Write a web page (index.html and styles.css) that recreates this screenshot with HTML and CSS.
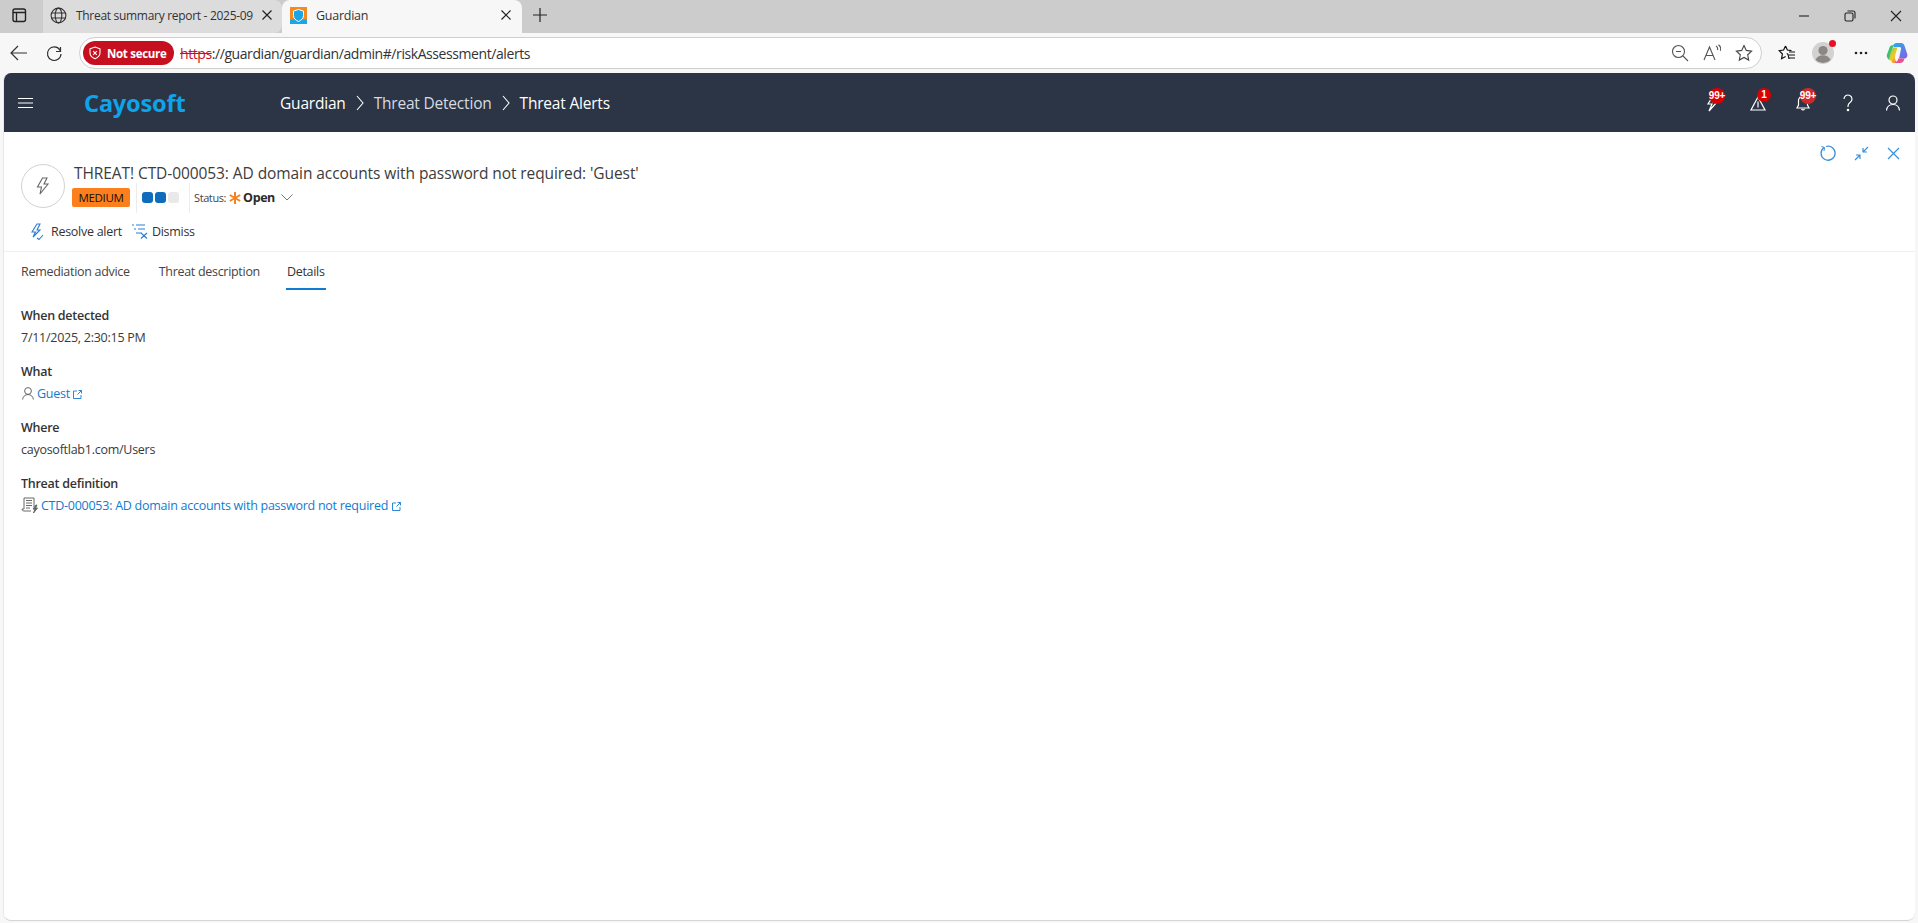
FILE: index.html
```html
<!DOCTYPE html>
<html lang="en">
<head>
<meta charset="utf-8">
<title>Guardian</title>
<link rel="stylesheet" href="styles.css">
</head>
<body>
<div class="browser">
  <div class="tabstrip">
    <div class="side-btn">
      <svg width="18" height="18" viewBox="0 0 18 18" fill="none" stroke="#222" stroke-width="1.4"><rect x="3" y="3" width="12.5" height="12.5" rx="2"/><path d="M3 6.500h12.500M6.500 6.500v9" stroke-width="1.300"/></svg>
    </div>
    <div class="tab">
      <svg class="tab-icon" width="17" height="17" viewBox="0 0 17 17" fill="none" stroke="#333" stroke-width="1.1"><circle cx="8.5" cy="8.5" r="7.4"/><ellipse cx="8.5" cy="8.5" rx="3.3" ry="7.4"/><path d="M1.6 6h13.8M1.6 11h13.8"/></svg>
      <span class="tab-title">Threat summary report - 2025-09</span>
      <svg class="tab-close" width="12" height="12" viewBox="0 0 12 12" stroke="#222" stroke-width="1.2"><path d="M1.5 1.5l9 9M10.5 1.5l-9 9"/></svg>
    </div>
    <div class="tab tab-active">
      <svg class="tab-icon" width="17" height="17" viewBox="0 0 17 17"><rect width="17" height="17" fill="#f78a1d"/><rect y="12.5" width="17" height="4.5" fill="#1aa5e6"/><path d="M8.5 2.5l5 1.6v4.4c0 3-2.3 4.8-5 6-2.7-1.2-5-3-5-6V4.100z" fill="#1aa5e6" stroke="#fff" stroke-width="1"/></svg>
      <span class="tab-title">Guardian</span>
      <svg class="tab-close" width="12" height="12" viewBox="0 0 12 12" stroke="#222" stroke-width="1.2"><path d="M1.5 1.5l9 9M10.5 1.5l-9 9"/></svg>
    </div>
    <svg class="new-tab" width="14" height="14" viewBox="0 0 14 14" stroke="#222" stroke-width="1.2"><path d="M7 0v14M0 7h14"/></svg>
    <div class="win-controls">
      <svg width="12" height="12" viewBox="0 0 12 12" stroke="#222" stroke-width="1.1"><path d="M1 6h10"/></svg>
      <svg width="12" height="12" viewBox="0 0 12 12" fill="none" stroke="#222" stroke-width="1.1"><rect x="1" y="3" width="8" height="8" rx="1.500"/><path d="M3.500 1h5.500a2 2 0 0 1 2 2v5.500"/></svg>
      <svg width="12" height="12" viewBox="0 0 12 12" stroke="#222" stroke-width="1.1"><path d="M1 1l10 10M11 1L1 11"/></svg>
    </div>
  </div>

  <div class="toolbar">
    <svg class="nav-back" width="18" height="16" viewBox="0 0 18 16" fill="none" stroke="#333" stroke-width="1.200"><path d="M17 8H1M8 1L1 8l7 7"/></svg>
    <svg class="nav-reload" width="17" height="17" viewBox="0 0 17 17" fill="none" stroke="#333" stroke-width="1.200"><path d="M14.500 2v4.500h-4.500M15 9a6.800 6.800 0 1 1-1.200-4.200l.7 1.700"/></svg>
    <div class="address">
      <span class="pill">
        <svg width="12" height="14" viewBox="0 0 12 14" fill="none" stroke="#fff" stroke-width="1.100"><path d="M6 1l5 1.800v4c0 3-2.200 4.900-5 6-2.800-1.100-5-3-5-6v-4z"/><path d="M4.200 5.200l3.600 3.600M7.800 5.200L4.200 8.800"/></svg>
        <span>Not secure</span>
      </span>
      <span class="url"><s class="url-scheme">https</s>://guardian/guardian/admin#/riskAssessment/alerts</span>
      <span class="addr-icons">
        <svg width="18" height="18" viewBox="0 0 18 18" fill="none" stroke="#555" stroke-width="1.100"><circle cx="7.500" cy="7.500" r="6"/><path d="M5 7.500h5M12 12l5 5"/></svg>
        <svg width="18" height="18" viewBox="0 0 18 18" fill="none" stroke="#555" stroke-width="1.100"><path d="M1 16L6.500 3 12 16M3 11.500h7M13 2c1.500 1 2 2.500 1.500 4M15.500 .8c2 1.500 2.600 4 1.800 6"/></svg>
        <svg width="18" height="18" viewBox="0 0 18 18" fill="none" stroke="#444" stroke-width="1.100"><path d="M9 1.500l2.300 4.900 5.300.7-3.900 3.700 1 5.300L9 13.500l-4.700 2.600 1-5.300-3.900-3.700 5.300-.7z"/></svg>
      </span>
    </div>
    <div class="tool-icons">
      <svg class="t-fav" width="18" height="18" viewBox="0 0 18 18" fill="none" stroke="#111" stroke-width="1.200"><path d="M7.500 2l1.900 4 4.100.6M11 15l-.9-4.500-1.300-1.100M7.500 2L5.600 6l-4.400.6L4.400 10l-.8 4.700 4-2.200"/><path d="M11 8h6M11 11h6M11 14h6"/></svg>
      <span class="avatar"><svg width="22" height="22" viewBox="0 0 22 22"><circle cx="11" cy="11" r="11" fill="#d3d2d0"/><circle cx="11" cy="8.500" r="4.600" fill="#8a8886"/><path d="M3.500 18c1-3.300 4-4.800 7.500-4.800s6.500 1.500 7.500 4.800a11 11 0 0 1-15 0z" fill="#8a8886"/></svg><i class="avatar-dot"></i></span>
      <svg class="t-more" width="14" height="4" viewBox="0 0 14 4" fill="#222"><circle cx="2" cy="2" r="1.300"/><circle cx="7" cy="2" r="1.300"/><circle cx="12" cy="2" r="1.300"/></svg>
      <svg class="t-copilot" width="22" height="22" viewBox="0 0 22 22"><defs><linearGradient id="cpA" x1="0" y1="0" x2="1" y2="1"><stop offset="0" stop-color="#1fb3e8"/><stop offset="1" stop-color="#8a5ce6"/></linearGradient><linearGradient id="cpB" x1="0" y1="0" x2="1" y2="1"><stop offset="0" stop-color="#5ecb4c"/><stop offset=".5" stop-color="#f6c928"/><stop offset="1" stop-color="#ef5a4a"/></linearGradient></defs><path d="M7 3.500C8 1.500 9.500 1 11 1h4c2 0 3 1.200 3.600 3l2.600 8c.8 2.500-.8 4.500-3.200 4.500h-5L15 7c.3-1.200-.4-2-1.500-2H8z" fill="url(#cpA)"/><path d="M8 3.500c-.6.700-1 1.500-1.200 2.300L4 14c-.6 2 .6 3.500 2.500 3.500 0 0-3 1-4.300-.5C1 15.800.5 14 1 12.500L3.700 5C4.400 3.300 6 2.800 8 3.500z" fill="#3fc06b"/><path d="M5 18.500c-1 0-1.800-.5-2.300-1L7 5.500h4.500L9 14c-.8 3 1 6 4 7H7c-.8 0-1.500-1.500-2-2.500z" fill="url(#cpB)"/><path d="M9 20.800c1 .4 2 .4 3 .2h2c2 0 3.500-1.300 4-3l.6-1.500h-6.300L12 17.500c-.4 1.500-1.500 2.900-3 3.300z" fill="#e8508f"/></svg>
    </div>
  </div>

  <div class="app">
    <header class="app-header">
      <svg class="menu" width="15" height="10" viewBox="0 0 15 10" stroke="#fff" stroke-width="1"><path d="M0 .5h15M0 5h15M0 9.500h15"/></svg>
      <span class="logo">Cayosoft</span>
      <nav class="crumbs">
        <span class="crumb-strong">Guardian</span>
        <svg width="8" height="16" viewBox="0 0 8 16" fill="none" stroke="#fff" stroke-width="1.100"><path d="M1 1l6 7-6 7"/></svg>
        <span class="crumb-mid">Threat Detection</span>
        <svg width="8" height="16" viewBox="0 0 8 16" fill="none" stroke="#fff" stroke-width="1.100"><path d="M1 1l6 7-6 7"/></svg>
        <span class="crumb-strong">Threat Alerts</span>
      </nav>
      <div class="head-icons">
        <span class="head-icon">
          <svg width="16" height="18" viewBox="0 0 16 18" fill="none" stroke="#fff" stroke-width="1.200"><path d="M8 2L3 10h4l-3 7 8-9H8l2-6z"/></svg>
          <b class="badge badge-a">99+</b>
        </span>
        <span class="head-icon">
          <svg width="16" height="16" viewBox="0 0 16 16" fill="none" stroke="#fff" stroke-width="1.200"><path d="M8 2l7 13H1zM8 6.500v6"/></svg>
          <b class="badge badge-b">1</b>
        </span>
        <span class="head-icon">
          <svg width="16" height="18" viewBox="0 0 16 18" fill="none" stroke="#fff" stroke-width="1.200"><path d="M8 2a4.500 4.500 0 0 0-4.500 4.500V11L2 14h12l-1.500-3V6.500A4.500 4.500 0 0 0 8 2zM6.500 15a1.700 1.700 0 0 0 3 0"/></svg>
          <b class="badge badge-c">99+</b>
        </span>
        <span class="head-icon">
          <svg width="12" height="18" viewBox="0 0 12 18" fill="none" stroke="#fff" stroke-width="1.200"><path d="M2 5a4 4 0 1 1 6.300 3.300C6.800 9.400 6 10 6 12v1"/><circle cx="6" cy="16" r=".7" fill="#fff"/></svg>
        </span>
        <span class="head-icon">
          <svg width="16" height="16" viewBox="0 0 16 16" fill="none" stroke="#fff" stroke-width="1.200"><circle cx="8" cy="5" r="4"/><path d="M1.500 15.500c.4-3.600 3-6 6.500-6s6.100 2.400 6.500 6"/></svg>
        </span>
      </div>
    </header>

    <section class="alert-head">
      <div class="alert-main">
        <span class="threat-circle">
          <svg width="14" height="18" viewBox="0 0 14 18" fill="none" stroke="#666" stroke-width="1.100"><path d="M6.500 1L1.500 10h4L4 17l8-10H8l3-6z"/></svg>
        </span>
        <div class="alert-info">
          <h1 class="alert-title">THREAT! CTD-000053: AD domain accounts with password not required: 'Guest'</h1>
          <div class="alert-meta">
            <span class="severity">MEDIUM</span>
            <span class="level"><i class="on"></i><i class="on"></i><i></i></span>
            <span class="status-label">Status:</span>
            <svg class="status-star" width="12" height="12" viewBox="0 0 12 12" stroke="#f58220" stroke-width="2"><path d="M6 0v12M.8 3l10.400 6M11.200 3L.8 9"/></svg>
            <span class="status-value">Open</span>
            <svg class="status-caret" width="12" height="7" viewBox="0 0 12 7" fill="none" stroke="#777" stroke-width="1"><path d="M.5.500L6 6l5.500-5.500"/></svg>
          </div>
        </div>
      </div>
      <div class="alert-tools">
        <svg width="16" height="16" viewBox="0 0 16 16" fill="none" stroke="#3a8fd9" stroke-width="1.300"><path d="M4 2.500a7 7 0 1 0 2-1"/><path d="M1.500 1.500L4.500 2.500 4 6" stroke-width="1"/></svg>
        <svg width="15" height="15" viewBox="0 0 15 15" fill="none" stroke="#3a8fd9" stroke-width="1.200"><path d="M14 1L9 6M9 2v4h4M1 14l5-5M2 9h4v4"/></svg>
        <svg width="13" height="13" viewBox="0 0 13 13" stroke="#3a8fd9" stroke-width="1.200"><path d="M1 1l11 11M12 1L1 12"/></svg>
      </div>
    </section>

    <div class="commands">
      <span class="cmd cmd-resolve">
        <svg width="14" height="17" viewBox="0 0 14 17" fill="none" stroke="#2b7cd3" stroke-width="1.100"><path d="M7 1L2 9h3.500L3 14l7-7H7l3-6zM7 15l2 1.500L13 12"/></svg>
        <span>Resolve alert</span>
      </span>
      <span class="cmd cmd-dismiss">
        <svg width="17" height="16" viewBox="0 0 17 16" fill="none" stroke="#2b7cd3" stroke-width="1.100"><path d="M1 2h2M5 2h9M3 6h2M7 6h7M5 10h6M10 10l6 5.500M16 10l-6 5.500" /></svg>
        <span>Dismiss</span>
      </span>
    </div>

    <div class="tabs">
      <span class="view-tab">Remediation advice</span>
      <span class="view-tab">Threat description</span>
      <span class="view-tab view-tab-on">Details</span>
    </div>

    <main class="details">
      <div class="field">
        <div class="field-label">When detected</div>
        <div class="field-value">7/11/2025, 2:30:15 PM</div>
      </div>
      <div class="field">
        <div class="field-label">What</div>
        <div class="field-value">
          <svg class="user-icon" width="12" height="13" viewBox="0 0 12 13" fill="none" stroke="#666" stroke-width="1"><circle cx="6" cy="4" r="3.400"/><path d="M.6 12.500c.3-3 2.500-5 5.400-5s5.100 2 5.400 5"/></svg>
          <a class="link">Guest</a>
          <svg class="ext ext-near" width="9" height="9" viewBox="0 0 9 9" fill="none" stroke="#2b88d8" stroke-width="1"><path d="M4 1H.5v7.500H8V5M4.500 4.500L8.500.5M5.500.5h3v3"/></svg>
        </div>
      </div>
      <div class="field">
        <div class="field-label">Where</div>
        <div class="field-value">cayosoftlab1.com/Users</div>
      </div>
      <div class="field">
        <div class="field-label">Threat definition</div>
        <div class="field-value">
          <svg class="def-icon" width="19" height="17" viewBox="0 0 19 17" fill="none" stroke="#666" stroke-width="1"><path d="M3 1h10v9M3 1v11H1c0 1.500 1 2 2 2h7M5 3.500h6M5 6h6M5 8.500h6M5 11h4"/><path d="M15 8l-3 4h2l-1.500 4 4-5h-2l1.500-3z" fill="#666"/></svg>
          <a class="link">CTD-000053: AD domain accounts with password not required</a>
          <svg class="ext" width="9" height="9" viewBox="0 0 9 9" fill="none" stroke="#2b88d8" stroke-width="1"><path d="M4 1H.5v7.500H8V5M4.500 4.500L8.500.5M5.500.5h3v3"/></svg>
        </div>
      </div>
    </main>
  </div>
</div>
</body>
</html>
```

FILE: styles.css
```css
* { box-sizing: border-box; }
html, body { margin: 0; height: 100%; overflow: hidden; }
body { font-family: "Open Sans", "Noto Sans", "Liberation Sans", sans-serif; color: #333; background: #f7f7f7; }

.browser { display: flex; flex-direction: column; height: 923px; }

/* tab strip */
.tabstrip { display: flex; align-items: stretch; height: 33px; background: #cccccc; flex: none; }
.side-btn { width: 43px; display: flex; align-items: center; justify-content: center; padding: 0 6px 3px 0; }
.tab { width: 239px; display: flex; align-items: center; padding: 0 9px 3px 6px; background: #dcdcdc; border-radius: 0 8px 8px 0; font-size: 12px; color: #333; letter-spacing: -.3px; }
.tab-icon { margin: 0 9px 0 1px; flex: none; }
.tab-title { flex: 1; white-space: nowrap; margin-right: 6px; }
.tab-close { flex: none; }
.tab-active { width: 240px; background: #f7f7f7; border-radius: 8px 8px 0 0; padding-left: 7px; padding-right: 10px; font-size: 12.500px; letter-spacing: -.25px; }
.new-tab { align-self: center; margin: -3px 0 0 11px; }
.win-controls { margin-left: auto; display: flex; align-items: center; gap: 34px; padding: 0 16px 1px 0; }

/* address bar */
.toolbar { display: flex; align-items: center; height: 40px; background: #f7f7f7; flex: none; padding-left: 10px; }
.nav-reload { margin-left: 18px; }
.address { margin-left: 16px; width: 1683px; height: 32px; display: flex; align-items: center; background: #fff; border: 1px solid #cfcfcf; border-radius: 16px; padding-left: 3px; }
.pill { display: flex; align-items: center; gap: 6px; height: 24px; width: 91px; padding-left: 6px; background: #c60f1f; border-radius: 12px; color: #fff; font-size: 11.500px; font-weight: 700; letter-spacing: -.3px; white-space: nowrap; }
.url { margin-left: 6px; font-size: 14px; letter-spacing: -.42px; color: #333; white-space: nowrap; }
.url-scheme { color: #c60f1f; }
.addr-icons { margin-left: auto; display: flex; align-items: center; gap: 14px; padding-right: 8px; }
.tool-icons { display: flex; align-items: center; margin-left: 16px; }
.avatar { position: relative; display: block; width: 22px; height: 22px; margin-left: 16px; }
.avatar svg { display: block; }
.avatar-dot { position: absolute; top: -2px; right: -2px; width: 7px; height: 7px; border-radius: 50%; background: #e81123; }
.t-more { margin-left: 20px; }
.t-copilot { margin-left: 18px; }

/* app shell */
.app { flex: 1; margin: 0 3px 2px; background: #fff; border-radius: 8px; border-left: 1px dotted #cfcfcf; border-bottom: 1px solid #d6d6d6; overflow: hidden; display: flex; flex-direction: column; }
.app-header { display: flex; align-items: center; height: 59px; background: #2b3545; flex: none; margin-left: -1px; color: #fff; }
.menu { margin-left: 15px; flex: none; }
.logo { margin-left: 51px; width: 196px; font-size: 23.500px; font-weight: 700; color: #0ea4ea; letter-spacing: -.2px; font-family: "Noto Sans", sans-serif; }
.crumbs { display: flex; align-items: center; gap: 10px; font-size: 15.500px; letter-spacing: -.2px; }
.crumb-mid { color: #d8dbe0; }
.head-icons { margin-left: auto; display: flex; align-items: center; }
.head-icon { position: relative; width: 45px; height: 24px; display: flex; align-items: center; justify-content: center; }
.badge { position: absolute; top: -3px; width: 16px; height: 16px; background: #d80000; border-radius: 50%; font: 700 10px/16px "Liberation Sans", sans-serif; letter-spacing: -.2px; color: #fff; display: flex; justify-content: center; white-space: nowrap; }
.badge-a { left: 19px; }
.badge-b { left: 22px; width: 14px; height: 14px; line-height: 14px; }
.badge-c { left: 20px; background: #cf2a2a; }

/* alert head */
.alert-head { display: flex; justify-content: space-between; align-items: flex-start; flex: none; }
.alert-main { display: flex; padding: 32px 0 0 17px; }
.threat-circle { width: 44px; height: 44px; border-radius: 50%; border: 1px solid #d2d2d2; display: flex; align-items: center; justify-content: center; flex: none; }
.alert-info { margin: -1px 0 0 9px; }
.alert-title { margin: 0; font-size: 15.500px; font-weight: 400; line-height: 20px; color: #3c3c3c; letter-spacing: -.08px; white-space: nowrap; }
.alert-meta { display: flex; align-items: center; height: 19px; margin: 5px 0 0 -2px; }
.severity { width: 58px; height: 19px; background: #fd7e1c; border-radius: 2px; color: #111; font-size: 11.500px; font-weight: 500; line-height: 19px; text-align: center; letter-spacing: -.35px; }
.level { display: flex; gap: 2px; height: 30px; align-items: center; padding: 0 10px 0 5px; border-left: 1px solid #ececec; border-right: 1px solid #ececec; margin-left: 6px; }
.level i { width: 11px; height: 11px; border-radius: 3px; background: #e9e9e9; }
.level i.on { background: #0f6cbd; }
.status-label { margin-left: 4px; font-size: 11px; letter-spacing: -.4px; color: #444; }
.status-star { margin-left: 3px; }
.status-value { margin-left: 2px; font-size: 12.500px; font-weight: 700; letter-spacing: -.4px; color: #2b2b2b; }
.status-caret { margin-left: 6px; }
.alert-tools { display: flex; align-items: center; gap: 18px; padding: 13px 15px 0 0; }

.commands { display: flex; align-items: center; height: 24px; margin-top: 11px; padding-left: 26px; font-size: 12.500px; letter-spacing: -.28px; color: #333; flex: none; box-sizing: content-box; padding-bottom: 8px; border-bottom: 1px solid #efefef; }
.cmd { display: flex; align-items: center; gap: 7px; }
.cmd-dismiss { margin-left: 9px; gap: 4px; }

/* tabs */
.tabs { display: flex; gap: 29px; height: 38px; padding-left: 17px; font-size: 12.500px; letter-spacing: -.3px; color: #444; flex: none; }
.view-tab { display: flex; align-items: center; padding-top: 2px; border-bottom: 2px solid transparent; }
.view-tab-on { font-weight: 500; border-bottom-color: #0f7bd1; padding: 2px 1px 0; color: #333; margin-left: -3px; }

/* details */
.details { display: flex; flex-direction: column; gap: 12px; padding: 14px 0 0 17px; font-size: 12.500px; letter-spacing: -.26px; }
.field-label { height: 22px; line-height: 22px; font-weight: 600; color: #333; padding-top: 1px; }
.field-value { height: 22px; display: flex; align-items: center; color: #3a3a3a; }
.user-icon { margin: 0 3px 0 1px; }
.def-icon { margin-right: 1px; }
.link { color: #0f7bd1; }
.ext { margin-left: 4px; margin-top: 2px; }
.ext-near { margin-left: 3px; }
```
